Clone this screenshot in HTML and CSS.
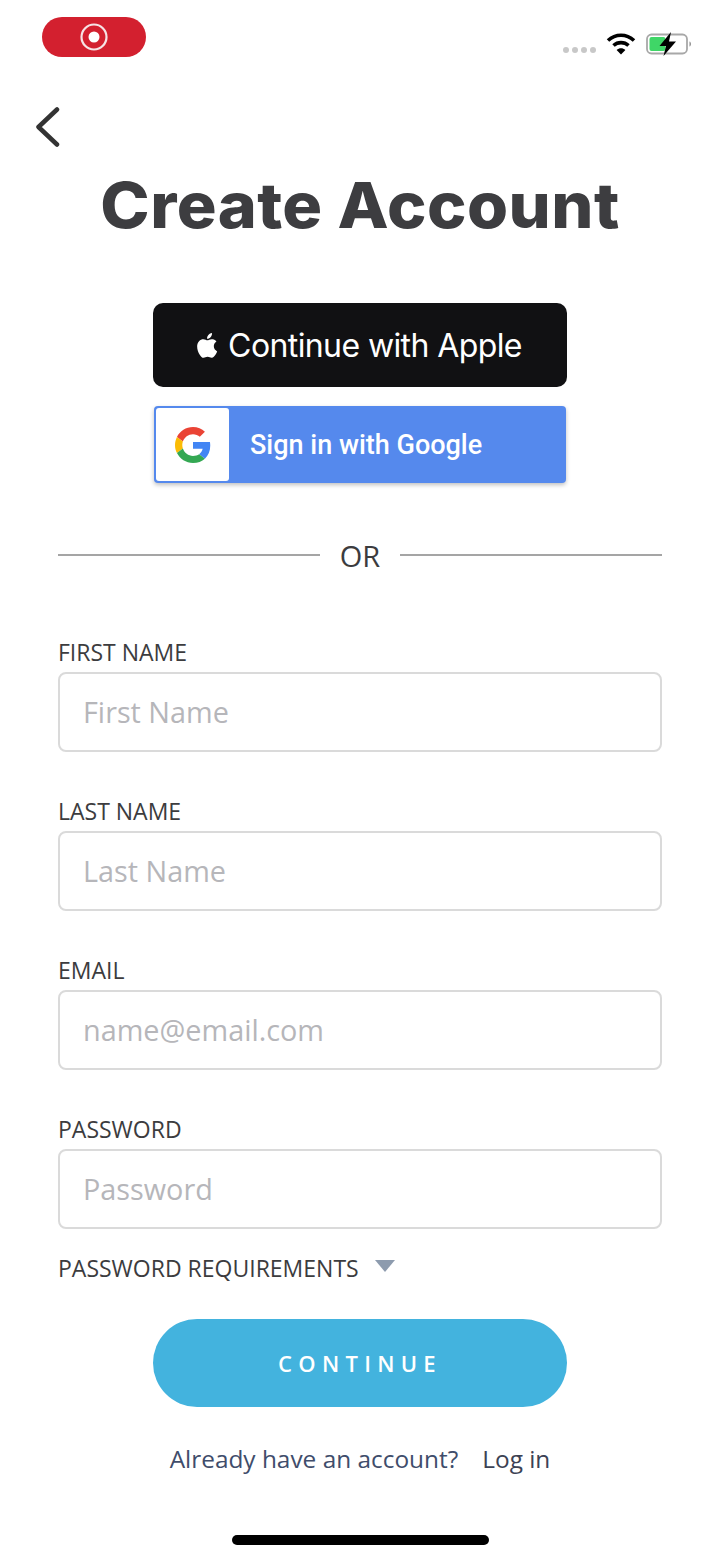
FILE: index.html
```html
<!DOCTYPE html>
<html lang="en">
<head>
<meta charset="UTF-8" />
<meta name="viewport" content="width=device-width, initial-scale=1" />
<title>Create Account</title>
<link rel="stylesheet" href="styles.css">
</head>
<body>

<div class="status-bar">
  <div class="record-pill">
    <svg width="30" height="30" viewBox="0 0 30 30">
      <circle cx="15" cy="15" r="12.500" fill="none" stroke="#f6e3e5" stroke-width="2.2" />
      <circle cx="15" cy="15" r="5.500" fill="#fff" />
    </svg>
  </div>
  <div class="status-icons">
    <div class="signal-dots"><span></span><span></span><span></span><span></span></div>
    <svg class="wifi" width="30" height="23" viewBox="0 0 30 23">
      <path d="M2 8.500C9.500 1.500 20.500 1.500 28 8.500" fill="none" stroke="#000" stroke-width="3.600" />
      <path d="M7.500 13.500C11.800 9.600 18.200 9.600 22.500 13.500" fill="none" stroke="#000" stroke-width="3.600" />
      <path d="M10.600 18L15 22.500L19.400 18C16.800 15.600 13.200 15.600 10.600 18Z" fill="#000" />
    </svg>
    <svg class="battery" width="47" height="24" viewBox="0 0 47 24">
      <rect x="1" y="2.500" width="40" height="19" rx="4.500" fill="#fff" stroke="#a8a8a8" stroke-width="1.800" />
      <rect x="3.500" y="5" width="16" height="14" rx="2" fill="#3fd667" />
      <path d="M43.500 9.500C45.400 10 45.400 14 43.500 14.500Z" fill="#888" />
      <path d="M25 0L13.500 14H20L17.500 24L30 9.500H23Z" fill="#000" />
    </svg>
  </div>
</div>

<div class="top-nav">
  <svg width="26" height="40" viewBox="0 0 26 40">
    <path d="M22 2.500L3.500 20L22 37.500" fill="none" stroke="#333" stroke-width="4.500" stroke-linecap="round" stroke-linejoin="round" />
  </svg>
</div>

<h1 class="page-title">Create Account</h1>

<div class="social-buttons">
  <button type="button" class="apple-btn">
    <svg width="22" height="25" viewBox="0 0 814 1000">
      <path fill="#fff" d="M788 341c-6 4-107 62-107 189 0 147 129 199 133 200-1 3-21 71-68 141-42 61-86 122-153 122s-84-39-161-39c-75 0-102 40-163 40s-104-57-153-126C59 787 13 661 13 541c0-192 125-294 248-294 65 0 120 43 161 43 39 0 100-45 175-45 28 0 130 3 191 96zM557 162c31-36 52-87 52-138 0-7-1-14-2-20-50 2-109 33-145 75-28 32-54 83-54 135 0 8 1 16 2 18 3 1 8 1 13 1 45 0 102-30 134-71z" />
    </svg>
    <span>Continue with Apple</span>
  </button>
  <button type="button" class="google-btn">
    <span class="google-icon">
      <svg width="36" height="36" viewBox="0 0 48 48">
        <path fill="#ea4335" d="M24 9.500c3.500 0 6.700 1.300 9.100 3.500l6.800-6.800C35.800 2.400 30.200 0 24 0 14.600 0 6.500 5.400 2.600 13.200l7.900 6.100C12.400 13.600 17.700 9.500 24 9.500z" />
        <path fill="#4285f4" d="M47 24.500c0-1.600-.2-3.100-.4-4.500H24v9h12.900c-.6 3-2.200 5.500-4.700 7.200l7.700 6C44.400 37.900 47 31.800 47 24.500z" />
        <path fill="#fbbc05" d="M10.500 28.700c-.5-1.400-.8-3-.8-4.700s.3-3.300.8-4.700l-7.900-6.100C.9 16.500 0 20.100 0 24s.9 7.500 2.600 10.800l7.900-6.100z" />
        <path fill="#34a853" d="M24 48c6.500 0 11.900-2.100 15.900-5.800l-7.700-6c-2.200 1.400-4.900 2.300-8.200 2.300-6.300 0-11.600-4.100-13.500-9.800l-7.900 6.100C6.500 42.600 14.600 48 24 48z" />
      </svg>
    </span>
    <span class="google-label">Sign in with Google</span>
  </button>
</div>

<div class="divider"><span>OR</span></div>

<form class="signup-form" autocomplete="off">
  <label for="first">FIRST NAME</label>
  <input type="text" id="first" placeholder="First Name" />

  <label for="last">LAST NAME</label>
  <input type="text" id="last" placeholder="Last Name" />

  <label for="email">EMAIL</label>
  <input type="email" id="email" placeholder="name@email.com" />

  <label for="password">PASSWORD</label>
  <input type="password" id="password" placeholder="Password" />

  <div class="pw-reqs">
    <span>PASSWORD REQUIREMENTS</span>
    <i class="caret"></i>
  </div>

  <button type="submit" class="continue-btn">CONTINUE</button>
</form>

<div class="login-link">
  <span>Already have an account?</span>
  <a href="#">Log in</a>
</div>

<div class="home-bar"></div>

</body>
</html>
```

FILE: styles.css
```css
* { box-sizing: border-box; }
html, body { margin: 0; padding: 0; }
body {
  width: 720px;
  height: 1560px;
  overflow: hidden;
  background: #fff;
  font-family: 'Open Sans', sans-serif;
  color: #3c3c3e;
}

.status-bar {
  height: 72px;
  padding: 17px 27px 0 42px;
  display: flex;
  justify-content: space-between;
  align-items: flex-start;
}
.record-pill {
  width: 104px;
  height: 40px;
  border-radius: 20px;
  background: #d3202f;
  display: flex;
  align-items: center;
  justify-content: center;
}
.status-icons {
  display: flex;
  align-items: flex-start;
  padding-top: 15px;
}
.signal-dots {
  display: flex;
  gap: 3px;
  margin: 15px 10px 0 0;
}
.signal-dots span {
  width: 6px;
  height: 6px;
  border-radius: 50%;
  background: #c8c8c8;
}
.battery { margin-left: 10px; }

.top-nav {
  height: 78px;
  padding: 35px 0 0 35px;
}
.top-nav svg { display: block; }

.page-title {
  margin: 0;
  height: 110px;
  line-height: 110px;
  text-align: center;
  font-family: Inter, sans-serif;
  font-size: 63px;
  font-weight: 800;
  letter-spacing: 0.4px;
  transform: scaleX(1.055);
  color: #3d3d40;
}

.social-buttons {
  margin-top: 43px;
  display: flex;
  flex-direction: column;
  align-items: center;
}
.apple-btn {
  width: 414px;
  height: 84px;
  border: none;
  border-radius: 10px;
  background: #111113;
  color: #fff;
  font-family: Inter, sans-serif;
  font-size: 32px;
  font-weight: 400;
  letter-spacing: -0.6px;
  display: flex;
  align-items: center;
  justify-content: center;
  gap: 10px;
  padding: 0 2px 0 0;
}
.google-btn {
  width: 412px;
  height: 77px;
  margin-top: 19px;
  border: none;
  border-radius: 4px;
  padding: 2px;
  background: #5589ed;
  box-shadow: 0 2px 4px rgba(0, 0, 0, 0.25);
  display: flex;
  align-items: stretch;
}
.google-icon {
  width: 73px;
  background: #fff;
  border-radius: 3px;
  display: flex;
  align-items: center;
  justify-content: center;
}
.google-label {
  margin-left: 21px;
  color: #fff;
  font-family: Roboto, sans-serif;
  font-size: 27px;
  font-weight: 500;
  line-height: 75px;
}

.divider {
  margin: 54px 58px 0;
  height: 36px;
  display: flex;
  align-items: center;
  gap: 20px;
  font-size: 29px;
  color: #3c3c3e;
}
.divider::before, .divider::after {
  content: '';
  flex: 1;
  height: 2px;
  background: #a5a5a5;
}

.signup-form {
  margin-top: 63px;
  padding: 0 58px;
}
.signup-form label {
  display: block;
  height: 36px;
  line-height: 32px;
  font-size: 23px;
  color: #3c3c3e;
}
.signup-form input {
  display: block;
  width: 100%;
  height: 80px;
  margin-bottom: 43px;
  padding: 0 23px 2px;
  border: 2px solid #dadada;
  border-radius: 8px;
  font-family: 'Open Sans', sans-serif;
  font-size: 28.8px;
  background: #fff;
}
.signup-form input::placeholder { color: #b6b6ba; opacity: 1; }
#password { margin-bottom: 20px; }

.pw-reqs {
  height: 40px;
  padding-bottom: 2px;
  display: flex;
  align-items: center;
  gap: 16px;
  font-size: 23px;
  color: #3c3c3e;
}
.caret {
  width: 0;
  height: 0;
  margin-bottom: 4px;
  border-left: 10px solid transparent;
  border-right: 10px solid transparent;
  border-top: 12px solid #8d9bae;
}
.continue-btn {
  display: block;
  width: 414px;
  height: 88px;
  margin: 30px auto 0;
  border: none;
  border-radius: 44px;
  background: #43b3de;
  color: #fff;
  font-family: 'Open Sans', sans-serif;
  font-size: 22px;
  font-weight: 600;
  letter-spacing: 6.3px;
}

.login-link {
  margin-top: 31px;
  height: 40px;
  display: flex;
  justify-content: center;
  gap: 24px;
  align-items: center;
  font-size: 24.4px;
  color: #3f4d6b;
}
.login-link a {
  color: #3c4254;
  text-decoration: none;
}

.home-bar {
  width: 257px;
  height: 10px;
  margin: 57px auto 0;
  border-radius: 5px;
  background: #000;
}
```
